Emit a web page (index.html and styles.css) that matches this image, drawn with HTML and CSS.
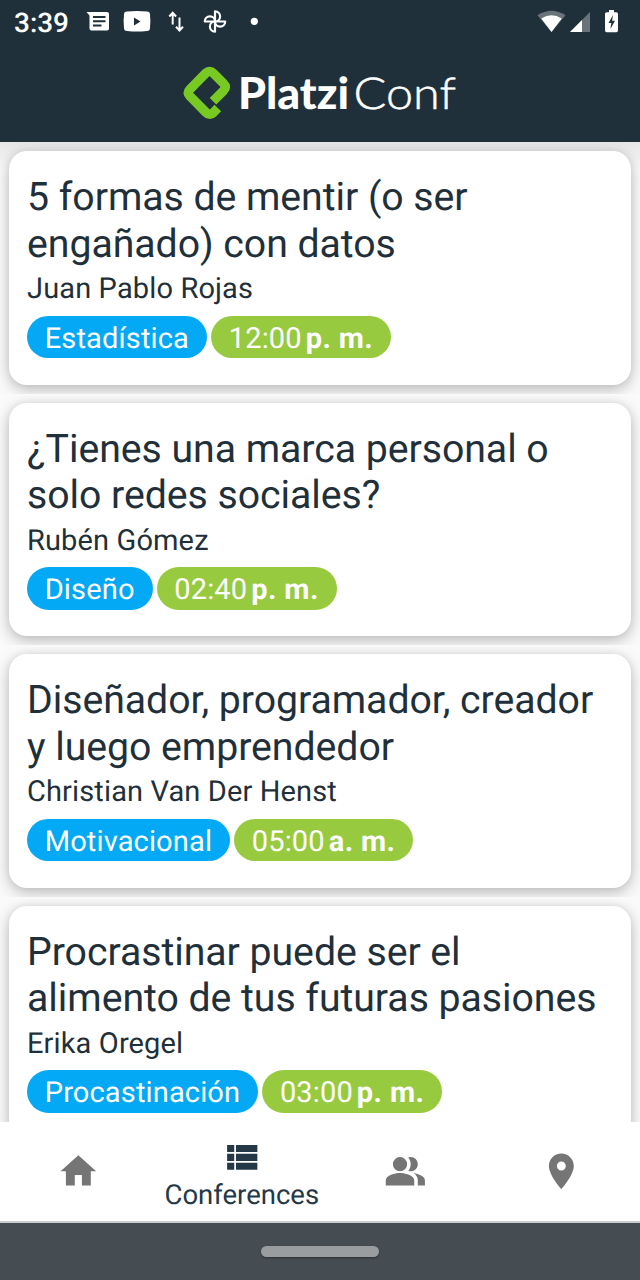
FILE: index.html
```html
<!DOCTYPE html>
<html lang="es">
<head>
<meta charset="utf-8">
<title>PlatziConf</title>
<link rel="stylesheet" href="styles.css">
</head>
<body>
<div class="app">
  <header class="header">
    <svg class="status" viewBox="0 0 640 44" width="640" height="44">
      <text class="clock" x="14" y="32" textLength="55" lengthAdjust="spacingAndGlyphs">3:39</text>
      <path fill="#fff" fill-rule="evenodd" d="M86.500 12h20.500q2 0 2 2v14.500q0 2-2 2h-15.500q-2 0-2-2v-13zM93 16v2h12.500v-2zM93 20.300v2h12.500v-2zM93 24.600v2h8.500v-2z"/>
      <path fill="#fff" fill-rule="evenodd" d="M127 11.500q10-1 20 0q3 0 3 3q.8 7 0 13.500q0 3-3 3q-10 1-20 0q-3 0-3-3q-.8-7 0-13.500q0-3 3-3zM134 17.500v8l6.500-4z"/>
      <path class="line" d="M172.700 24.500V13.500M169.300 16.500l3.400-3.700 3.400 3.700M179.500 17.500v12M176 26.800l3.500 3.700 3.500-3.700"/>
      <path class="line pinwheel" d="M215 21.500V11.300a5.100 5.100 0 0 1 0 10.200M215 21.500h10.200a5.100 5.100 0 0 1-10.200 0M215 21.500v10.200a5.100 5.100 0 0 1 0-10.200M215 21.500h-10.200a5.100 5.100 0 0 1 10.200 0"/>
      <circle cx="254.300" cy="21.300" r="3.600" fill="#fff"/>
      <path fill="#697379" d="M537.500 15.200q14-9 28 0L551.500 32z"/>
      <path fill="#fff" d="M541.300 18.500q10.200-6.500 20.400 0L551.500 32z"/>
      <path fill="#697379" d="M590 12v20h-20z"/>
      <path fill="#fff" d="M582 20v12h-12z"/>
      <path fill="#fff" fill-rule="evenodd" d="M609 10h5v2.300h2.300q1.700 0 1.700 1.700v16.500q0 1.700-1.700 1.700h-9.600q-1.700 0-1.700-1.700V14q0-1.700 1.700-1.700H609zM613 15l-4.500 8h2.800l-.9 6 4.600-8.200h-2.900z"/>
    </svg>
    <svg class="brand" viewBox="184 66 274 54" width="274" height="54">
      <path class="mark" d="M213 101.200L223.600 90.600Q227 87 223.600 83.500L213.400 73.200Q209.600 69.500 205.800 73.200L190 89.200Q186.700 92.800 190 96.300L206.200 112.600Q209.800 116.200 213.400 112.600L217.800 108"/>
      <text class="brand-bold" x="238" y="109" textLength="111" lengthAdjust="spacingAndGlyphs">Platzi</text>
      <text class="brand-thin" x="353.500" y="109" textLength="102.500" lengthAdjust="spacingAndGlyphs">Conf</text>
    </svg>
  </header>
  <main class="list">
    <div class="row first"><article class="card">
      <h2 class="title">5 formas de mentir (o ser<br>engañado) con datos</h2>
      <p class="speaker">Juan Pablo Rojas</p>
      <div class="chips"><span class="chip topic">Estadística</span><span class="chip time">12:00<b>p. m.</b></span></div>
    </article></div>
    <div class="row"><article class="card">
      <h2 class="title">¿Tienes una marca personal o<br>solo redes sociales?</h2>
      <p class="speaker">Rubén Gómez</p>
      <div class="chips"><span class="chip topic">Diseño</span><span class="chip time">02:40<b>p. m.</b></span></div>
    </article></div>
    <div class="row"><article class="card">
      <h2 class="title">Diseñador, programador, creador<br>y luego emprendedor</h2>
      <p class="speaker">Christian Van Der Henst</p>
      <div class="chips"><span class="chip topic">Motivacional</span><span class="chip time">05:00<b>a. m.</b></span></div>
    </article></div>
    <div class="row"><article class="card">
      <h2 class="title">Procrastinar puede ser el<br>alimento de tus futuras pasiones</h2>
      <p class="speaker">Erika Oregel</p>
      <div class="chips"><span class="chip topic">Procastinación</span><span class="chip time">03:00<b>p. m.</b></span></div>
    </article></div>
  </main>
  <nav class="nav">
    <a class="tab"><svg class="icon" viewBox="0 0 24 24"><path d="M10 20v-6h4v6h5v-8h3L12 3 2 12h3v8z"/></svg></a>
    <a class="tab active"><svg class="icon" viewBox="0 0 24 24"><path d="M4 14h4v-4H4v4zm0 5h4v-4H4v4zM4 9h4V5H4v4zm5 5h12v-4H9v4zm0 5h12v-4H9v4zM9 5v4h12V5H9z"/></svg><span class="label">Conferences</span></a>
    <a class="tab"><svg class="icon" viewBox="0 0 24 24"><path d="M16.670 13.130C18.040 14.060 19 15.320 19 17v3h4v-3c0-2.180-3.570-3.470-6.330-3.870zM15 12c2.210 0 4-1.790 4-4s-1.790-4-4-4c-.47 0-.91.1-1.330.24C14.500 5.270 15 6.580 15 8s-.5 2.730-1.330 3.760c.42.14.86.24 1.330.24zM9 12a4 4 0 1 0 0-8 4 4 0 0 0 0 8zM9 13c-2.670 0-8 1.340-8 4v3h16v-3c0-2.660-5.330-4-8-4z"/></svg></a>
    <a class="tab"><svg class="icon" viewBox="0 0 24 24"><path d="M12 2C8.130 2 5 5.130 5 9c0 5.250 7 13 7 13s7-7.750 7-13c0-3.870-3.130-7-7-7zm0 9.500a2.500 2.500 0 0 1 0-5 2.500 2.500 0 0 1 0 5z"/></svg></a>
  </nav>
  <footer class="system"><span class="handle"></span></footer>
</div>
</body>
</html>
```
FILE: styles.css
```css
* { box-sizing: border-box; }
body { margin: 0; font-family: Roboto, sans-serif; color: #1f303a; text-rendering: geometricPrecision; }
.app { width: 640px; height: 1280px; display: flex; flex-direction: column; overflow: hidden; background: #fafafa; }
.header { flex: none; height: 142px; background: #1f303a; display: flex; flex-direction: column; align-items: flex-start; }
.status { display: block; }
.clock { font-size: 27px; font-weight: 500; fill: #fff; }
.line { fill: none; stroke: #fff; stroke-width: 2; }
.pinwheel { stroke-width: 2.200; stroke-linejoin: round; }
.brand { display: block; margin: 22px 0 0 184px; overflow: visible; }
.mark { fill: none; stroke: #78ca22; stroke-width: 9.300; stroke-linejoin: round; }
.brand-bold { font-family: Lato, sans-serif; font-weight: 900; font-size: 44px; fill: #fff; }
.brand-thin { font-family: Lato, sans-serif; font-weight: 300; font-size: 44px; fill: #fff; stroke: #fff; stroke-width: .5; }
.list { flex: 1; min-height: 0; overflow: hidden; }
.row { height: 251.600px; padding: 9px; overflow: hidden; }
.row.first { background: linear-gradient(#e6e6e6, #fafafa 30px); }
.card { height: 233.600px; padding: 23px 18px 0; border-radius: 18px; background: #fff; box-shadow: 0 5px 16px rgba(0,0,0,.23), 0 0 9px rgba(0,0,0,.08); }
.title { margin: 0; font-size: 39.250px; font-weight: 400; line-height: 46.500px; white-space: nowrap; letter-spacing: -.05px; }
.speaker { margin: 0; font-size: 29px; line-height: 34px; padding-top: 5.200px; height: 48.500px; letter-spacing: .13px; }
.chips { display: flex; gap: 4px; }
.chip { height: 42.500px; padding: 0 18px 0 17.700px; border-radius: 22px; color: #fff; font-size: 29px; line-height: 46px; letter-spacing: .15px; white-space: nowrap; }
.chip b { margin-left: 4px; letter-spacing: .4px; }
.topic { background: #03a9f4; }
.time { background: #97ca3f; }
.nav { flex: none; height: 101px; border-bottom: 2px solid #c9cccd; background: #fff; display: grid; grid-template-columns: 156.400px 170.800px 156.200px 156.600px; }
.tab { display: flex; flex-direction: column; align-items: center; padding-top: 28px; color: #757575; }
.tab.active { padding-top: 14px; color: #253848; }
.icon { flex: none; display: block; width: 42.700px; height: 42.700px; fill: currentColor; }
.label { font-size: 27.500px; line-height: 33px; margin-top: -1px; }
.system { flex: none; height: 57px; background: #454d53; display: flex; justify-content: center; align-items: center; }
.handle { width: 118px; height: 11px; border-radius: 6px; background: #9a9da0; box-shadow: 0 1px 2px rgba(0,0,0,.4); }
```
